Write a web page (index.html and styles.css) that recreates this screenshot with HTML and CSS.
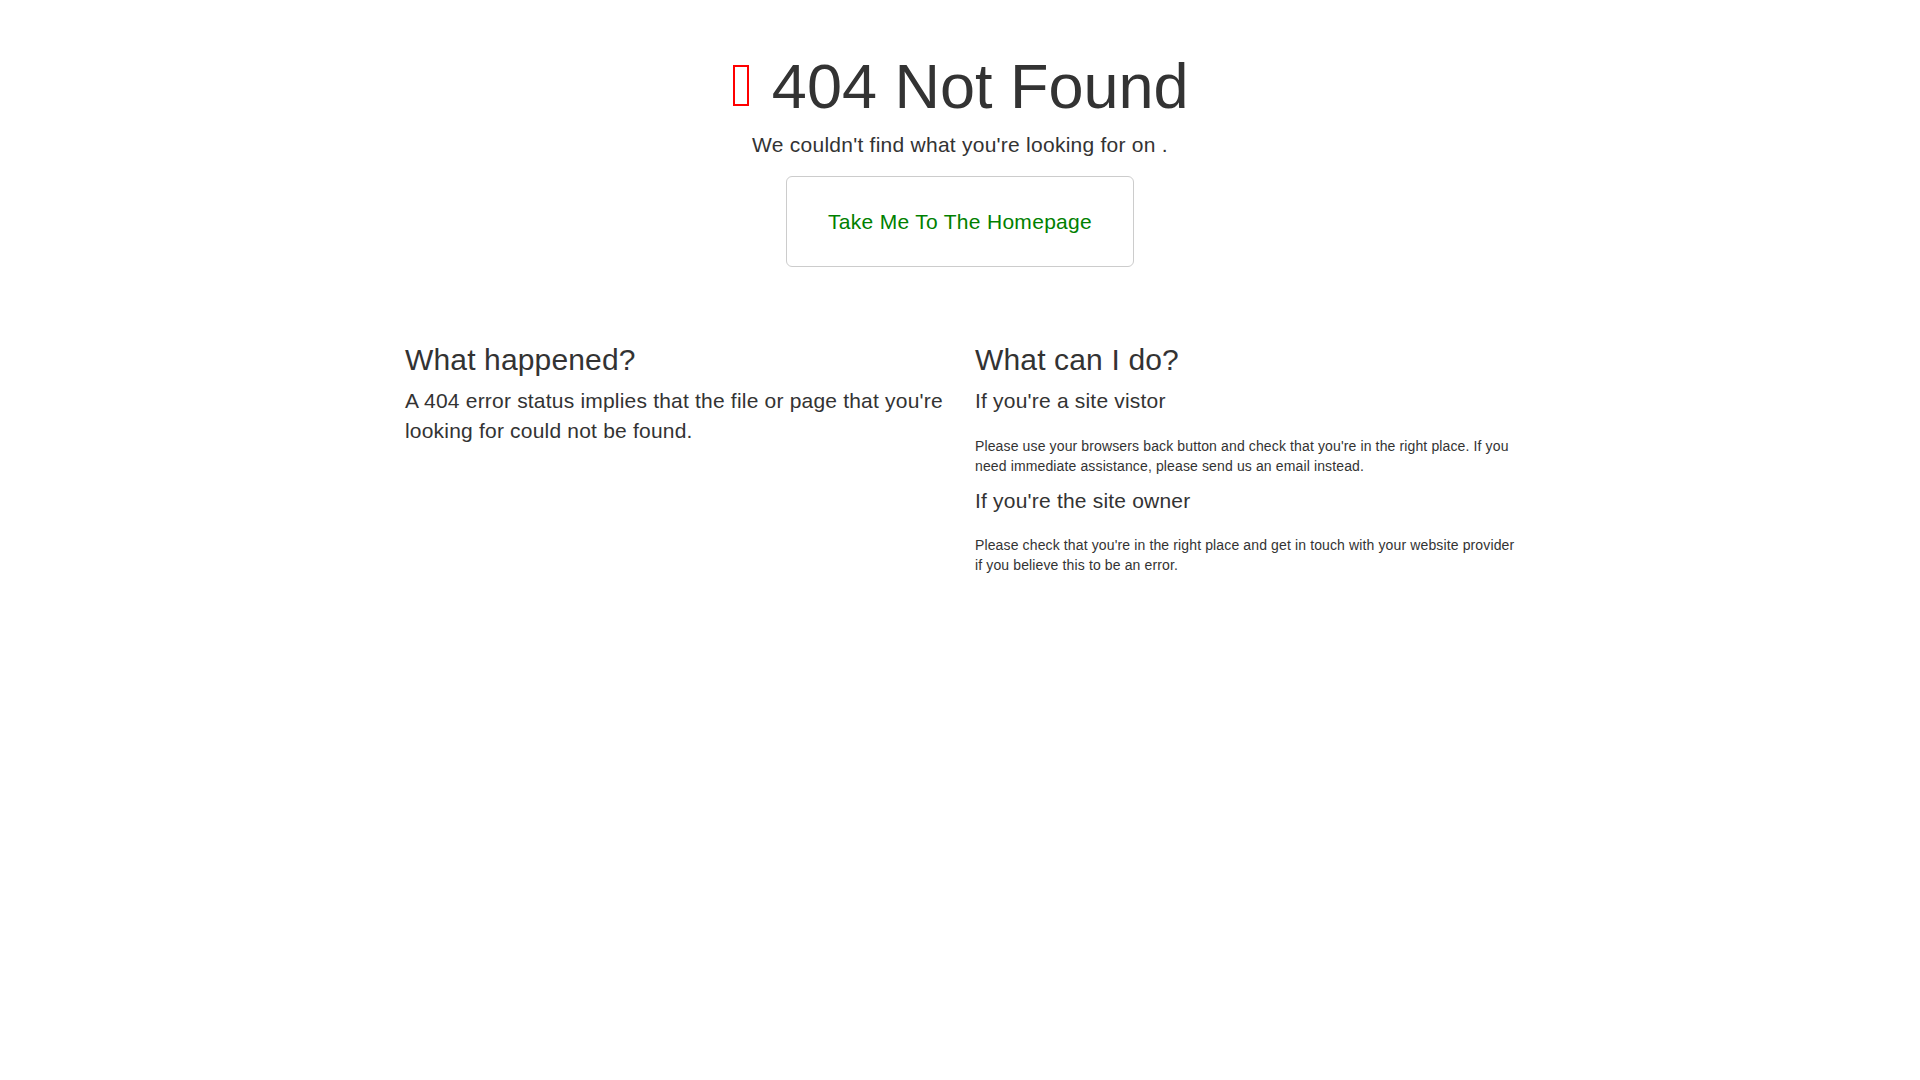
FILE: index.html
```html
<!DOCTYPE html>
<html lang="en">
<head>
    <meta charset="UTF-8">
    <meta name="viewport" content="width=device-width, initial-scale=1.0">
    <title>404 Not Found</title>
    <link rel="stylesheet" href="styles.css">
</head>
<body>
    <div class="hero">
        <h1 class="title"><span class="missing-icon"></span> 404 Not Found</h1>
        <p class="hero-lead">We couldn't find what you're looking for on <em class="domain"></em>.</p>
        <a href="/" class="home-button">Take Me To The Homepage</a>
    </div>
    <div class="content">
        <div class="column">
            <h2 class="section-title">What happened?</h2>
            <p class="lead">A 404 error status implies that the file or page that you're looking for could not be found.</p>
        </div>
        <div class="column">
            <h2 class="section-title">What can I do?</h2>
            <p class="lead">If you're a site vistor</p>
            <p class="text">Please use your browsers back button and check that you're in the right place. If you need immediate assistance, please send us an email instead.</p>
            <p class="lead">If you're the site owner</p>
            <p class="text">Please check that you're in the right place and get in touch with your website provider if you believe this to be an error.</p>
        </div>
    </div>
</body>
</html>
```

FILE: styles.css
```css
body {
    margin: 0;
    font-family: "Liberation Sans", Arial, Helvetica, sans-serif;
    font-size: 14px;
    line-height: 20px;
    color: #333;
    background-color: #fff;
}

.hero {
    text-align: center;
    padding: 52px 0 56px;
}

.title {
    margin: 0;
    font-size: 63px;
    font-weight: normal;
    line-height: 69px;
}

.missing-icon {
    display: inline-block;
    box-sizing: border-box;
    width: 16px;
    height: 41px;
    margin: 0 5px 2px 2px;
    border: 2px solid #f00;
}

.hero-lead {
    margin: 9px 0 17px;
    font-size: 21px;
    line-height: 1.4;
    letter-spacing: 0.25px;
}

.domain {
    font-style: italic;
}

.home-button {
    display: inline-block;
    padding: 22px 41px;
    font-size: 21px;
    line-height: 45px;
    letter-spacing: 0.3px;
    color: green;
    text-decoration: none;
    border: 1px solid #ccc;
    border-radius: 6px;
}

.content {
    display: grid;
    grid-template-columns: 1fr 1fr;
    column-gap: 30px;
    max-width: 1110px;
    margin: 0 auto;
}

.section-title {
    margin: 20px 0 10px;
    font-size: 30px;
    font-weight: normal;
    line-height: 1.1;
    letter-spacing: 0.15px;
}

.lead {
    margin: 0 0 20px;
    font-size: 21px;
    line-height: 1.4;
    letter-spacing: 0.2px;
}

.text {
    margin: 0 0 10px;
    letter-spacing: 0.13px;
}
```
